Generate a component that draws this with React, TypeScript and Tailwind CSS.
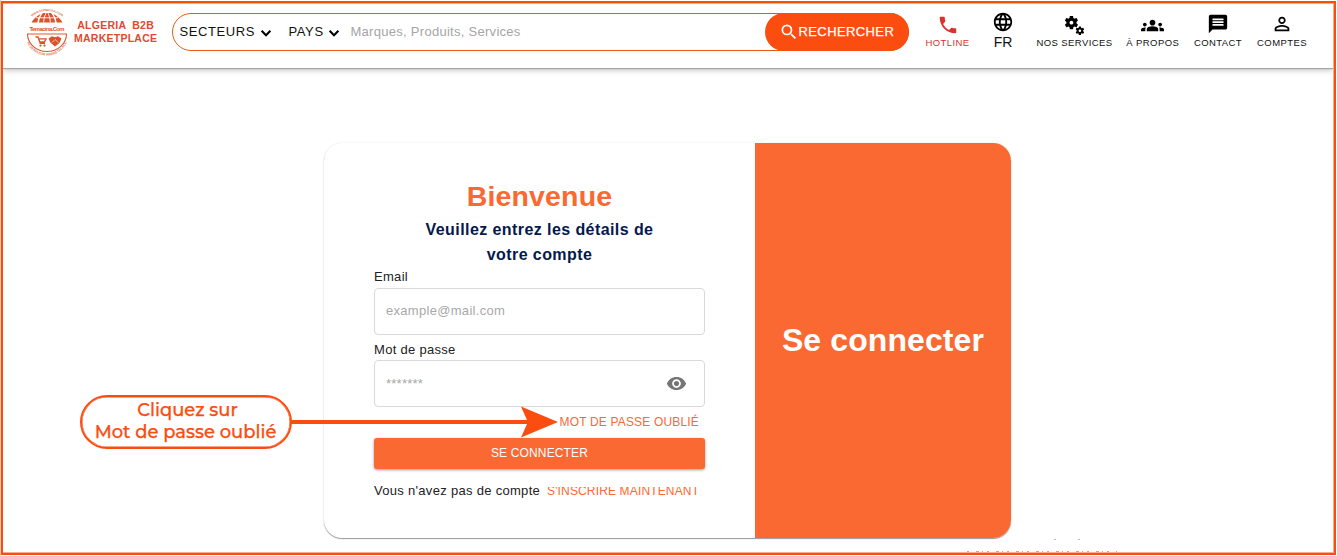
import React from "react";
import {
  MdPhone, MdLanguage, MdMiscellaneousServices, MdGroups, MdMessage,
  MdPersonOutline, MdSearch, MdVisibility,
} from "react-icons/md";

function Logo() {
  return (
    <svg className="h-[48px] w-[44px] shrink-0 overflow-visible" viewBox="0 0 44 48" fill="none">
      <defs>
        <path id="arcTop" d="M6 9 Q22 -3 38 9" />
        <path id="arcBottom" d="M0.800 27 A21.200 20.500 0 0 0 43.200 27" />
      </defs>
      <text fontSize="3.6" fontWeight="700" fill="#e07a5c" fontFamily="Liberation Sans" textAnchor="middle">
        <textPath href="#arcTop" startOffset="50%">www.temacina.com</textPath>
      </text>
      <path d="M6.500 14.500 Q9.500 9 15.500 6 Q13 9.500 12.300 14.500Z M14 14.500 Q14.500 9 18 5 H26 Q29.500 9 30 14.500Z M37.500 14.500 Q34.500 9 28.500 6 Q31 9.500 31.700 14.500Z" fill="#d9532c" />
      <path d="M18.600 14.500 Q18.800 9 21 5 M25.400 14.500 Q25.200 9 23 5 M11 9.800 H33" stroke="#fff" strokeWidth="0.900" />
      <text x="22" y="22.700" fontSize="5.800" fontWeight="700" fill="#d9532c" fontFamily="Liberation Sans" textAnchor="middle" textLength="35">Temacina.Com</text>
      <path d="M2.500 26 H41.500 A19.500 17.500 0 0 1 2.500 26Z" stroke="#dd5a35" strokeWidth="1.100" />
      <path d="M10.500 29 H13 L15.200 35.300 H20 M13.800 30.800 H21 L19.500 34 H15" stroke="#d9532c" strokeWidth="1.300" />
      <circle cx="15.500" cy="37.600" r="1.100" fill="#d9532c" />
      <circle cx="19.500" cy="37.600" r="1.100" fill="#d9532c" />
      <path d="M23.500 30.500 L27 28.300 L30 29.300 L33 28.300 L36.500 30.500 L34.500 35 L30 38.500 L25.500 34.800Z" fill="#d9532c" />
      <path d="M27 34.500 L30 31.500 L33.500 34.500" stroke="#fff" strokeWidth="0.600" />
      <text fontSize="3.400" fontWeight="700" fill="#e07a5c" fontFamily="Liberation Sans" textAnchor="middle">
        <textPath href="#arcBottom" startOffset="50%">ALGERIA B2B MARKETPLACE</textPath>
      </text>
    </svg>
  );
}

function Chevron({ className = "" }: { className?: string }) {
  return (
    <svg className={`size-[20px] shrink-0 ${className}`} viewBox="0 0 20 20" fill="none">
      <path d="M5.600 7.800 L10 12.200 L14.400 7.800" stroke="#000" strokeWidth="2.100" />
    </svg>
  );
}

function NavItem({ icon, label, className = "" }: { icon: React.ReactNode; label: string; className?: string }) {
  return (
    <a className={`flex shrink-0 flex-col items-center whitespace-nowrap pt-[9px] text-[9.5px] leading-[12px] tracking-[0.4px] ${className}`}>
      <span className="flex h-[24px] items-center">{icon}</span>
      <span>{label}</span>
    </a>
  );
}

function Header() {
  return (
    <header className="flex h-[64px] shrink-0 items-start bg-white text-[#111] shadow-[0_1px_1px_#a6a6a6,0_2px_6px_rgba(0,0,0,0.25)]">
      <div className="flex w-[168.5px] shrink-0 pl-[22px] pt-[4px]">
        <Logo />
        <div className="-mr-4 flex flex-col items-center whitespace-pre pl-[5px] pt-[11px] text-[10.5px] font-bold leading-[13px] tracking-[0.25px] text-[#dd4a33]">
          <span>ALGERIA  B2B</span>
          <span>MARKETPLACE</span>
        </div>
      </div>
      <div className="mt-[9px] flex h-[38px] w-[737.5px] shrink-0 items-center rounded-full border-[1.5px] border-[#ea5a14] pl-[7px] text-[13px]">
        <span className="w-[76px] tracking-[0.6px]">SECTEURS</span>
        <Chevron className="mt-[2px]" />
        <span className="ml-[13px] w-[36px] tracking-[0.6px]">PAYS</span>
        <Chevron className="-ml-[1px] mt-[2px]" />
        <span className="ml-[7px] flex-1 tracking-[0.28px] text-[#a5a5a5]">Marques, Produits, Services</span>
        <button className="-my-[2px] -mr-[1px] flex h-[38px] w-[144px] items-center rounded-full bg-[#fa4d0f] pl-[13.5px] text-white">
          <MdSearch className="size-[20px]" />
          <span className="tracking-[0.4px] [-webkit-text-stroke:0.25px_white]">RECHERCHER</span>
        </button>
      </div>
      <nav className="flex shrink-0 gap-[13px] pl-[16.5px]">
        <NavItem className="w-[44px] text-[#d8322f]" icon={<MdPhone className="size-[22px]" />} label="HOTLINE" />
        <a className="mx-[10px] flex w-[21px] shrink-0 flex-col items-center pt-[7px] text-[14px] leading-[16px]">
          <MdLanguage className="size-[22px] shrink-0 text-black" />
          <span className="pt-[1px]">FR</span>
        </a>
        <NavItem className="w-[76px]" icon={<MdMiscellaneousServices className="size-[23px] text-black" />} label="NOS SERVICES" />
        <NavItem className="w-[54.5px]" icon={<MdGroups className="size-[23px] text-black" />} label="À PROPOS" />
        <NavItem className="w-[50px]" icon={<MdMessage className="mb-[2px] size-[22px] text-black" />} label="CONTACT" />
        <NavItem className="w-[52px]" icon={<MdPersonOutline className="mb-[2px] size-[22px] text-black" />} label="COMPTES" />
      </nav>
    </header>
  );
}

function LoginCard() {
  return (
    <section className="mt-[75px] ml-[321px] flex h-[395px] w-[687px] shrink-0 overflow-hidden rounded-[18px] bg-white shadow-[0_1px_1px_#999,0_0_2px_rgba(0,0,0,0.1)]">
      <form className="flex w-[431px] flex-col pl-[50px] pr-[50px] pt-[34px] text-[13px] text-[#222]">
        <h1 className="text-center text-[28.5px] font-bold leading-[38px] tracking-[0.15px] text-[#fa6932]">Bienvenue</h1>
        <p className="mt-[2px] text-center text-[16px] font-bold leading-[25px] tracking-[0.42px] text-[#04194d]">
          Veuillez entrez les détails de<br />votre compte
        </p>
        <label className="mt-[1px] h-[18px] leading-[18px] tracking-[0.3px]">Email</label>
        <div className="mt-[2px] flex h-[47px] shrink-0 items-center rounded-[4px] border border-[#d9d9d9] px-[11px] pb-[2px] tracking-[0.3px] text-[#a8a8a8]">
          example@mail.com
        </div>
        <label className="mt-[6px] h-[18px] leading-[18px] tracking-[0.3px]">Mot de passe</label>
        <div className="mt-[1px] flex h-[47px] shrink-0 items-center justify-between rounded-[4px] border border-[#d9d9d9] pl-[11px] pr-[17px] tracking-[0.25px] text-[#a8a8a8]">
          <span>*******</span>
          <MdVisibility className="size-[21px] text-[#757575]" />
        </div>
        <a className="mt-[7px] pr-[6px] text-right text-[12px] leading-[16px] tracking-[0.17px] text-[#fa6932]">MOT DE PASSE OUBLIÉ</a>
        <button className="mt-[8px] h-[31px] shrink-0 rounded-[3px] bg-[#fa6932] pb-[2px] text-[12px] tracking-[0.15px] text-white shadow-[0_1px_3px_rgba(0,0,0,0.4)]">SE CONNECTER</button>
        <div className="mt-[13px] flex items-center whitespace-nowrap leading-[18px]">
          <span className="w-[173px] shrink-0 tracking-[0.3px]">Vous n'avez pas de compte</span>
          <span className="mt-[3px] flex h-[12px] items-center overflow-hidden text-[12px] leading-[12px] tracking-[0.15px] text-[#fa6932]">
            <span className="-mt-[4px]">S'INSCRIRE MAINTENANT</span>
          </span>
        </div>
      </form>
      <div className="flex w-[256px] items-center justify-center bg-[#fa6932] pb-[2px] text-[32px] font-bold text-white">
        <span className="whitespace-nowrap tracking-[0.1px]">Se connecter</span>
      </div>
    </section>
  );
}

function Callout() {
  return (
    <div className="absolute left-[79.5px] top-[394px] flex h-[56px] items-center font-[Montserrat,Inter,sans-serif] text-[#fa4d0f]">
      <div className="flex h-[54.5px] w-[212px] flex-col items-center justify-center rounded-full border-[2.5px] border-[#fa4d0f] bg-white pb-[3px] text-[17.9px] font-medium leading-[22px] shadow-[inset_0_0_0_0.5px_#fa4d0f] [-webkit-text-stroke:0.25px_#fa4d0f]">
        <span className="pl-[4px]">Cliquez sur</span>
        <span className="whitespace-nowrap">Mot de passe oublié</span>
      </div>
      <svg className="-ml-px h-[32px] w-[268px]" viewBox="0 0 268 32">
        <path d="M0 14H236L230 0.500L267 16L230 31.500L236 18H0Z" fill="#fa4d0f" />
      </svg>
    </div>
  );
}

export default function App() {
  return (
    <div className="h-[556px] w-[1337px] overflow-hidden border-l border-[#fdc4ae] bg-white py-px pr-px font-['Liberation_Sans',Arial,sans-serif]">
      <div className="h-[554px] w-[1335px] border-2 border-[#fa4d0f]">
        <div className="flex h-[550px] w-[1331px] flex-col overflow-hidden border-y border-r border-[#fcab8c]">
          <Header />
          <LoginCard />
          <svg className="ml-[960px] h-[14px] w-[160px] shrink-0" viewBox="0 0 160 14">
            <path d="M91 1.500H93M115 1.500H117" stroke="#bbb" />
            <path d="M4 13.500H154" stroke="#c9a898" strokeDasharray="2 7 3 3 1 4" />
          </svg>
        </div>
      </div>
      <Callout />
    </div>
  );
}
